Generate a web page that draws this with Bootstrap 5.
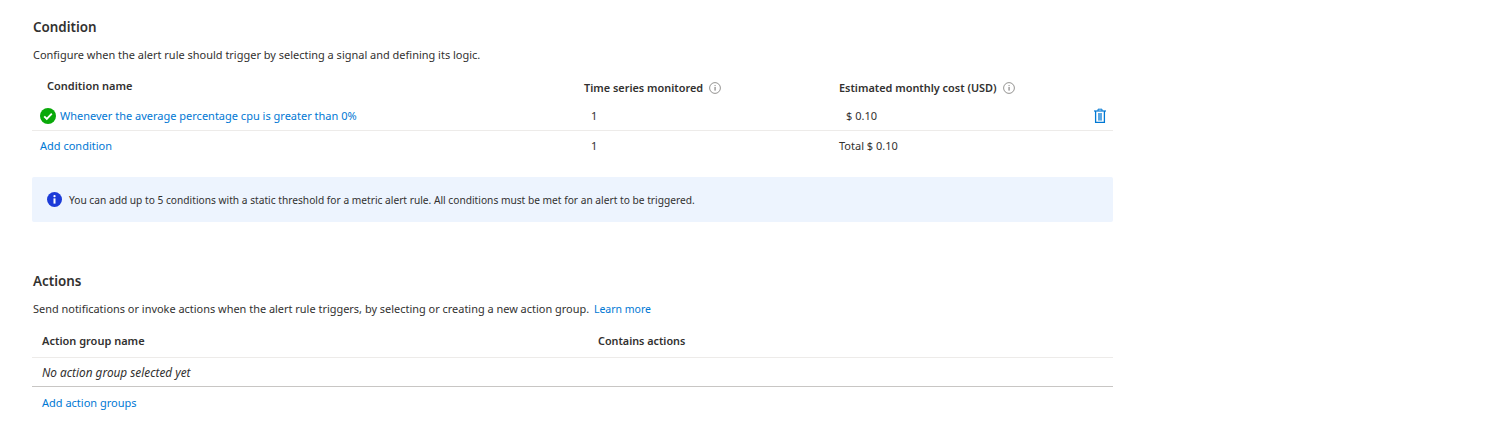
<!DOCTYPE html>
<html lang="en">
<head>
<meta charset="utf-8">
<title>Alert rule</title>
<link href="https://cdn.jsdelivr.net/npm/bootstrap@5.3.0/dist/css/bootstrap.min.css" rel="stylesheet">
<style>
body{font-family:"Noto Sans","Open Sans",sans-serif;font-size:11px;color:#323130;background:#fff;line-height:16px}
.page-wrap{width:1081px;margin-left:32px;padding-top:18px}
.sec-title{font-size:13.4px;font-weight:600;line-height:18px;margin:0;padding-left:1px}
.sec-desc{margin:0;line-height:16px;padding-left:1px}
.desc-one{margin-top:11px;font-size:10.98px}
.desc-two{margin-top:11px;font-size:10.95px}
.desc-two a{font-size:10.5px;margin-left:2px}
a.az-link{color:#0078d4;text-decoration:none}
.th-text{font-weight:600}
.cond-head{height:32px;margin-top:7px}
.cond-row{height:29px}
.cond-sep{border-bottom:1px solid #edebe9}
.c-a{width:552px;flex:none}
.c-b{width:255px;flex:none}
.c-c{flex:1 1 auto}
.pl-name{padding-left:15px}
.th-low{margin-top:3px;font-size:10.9px;gap:6px}
.pl-check{padding-left:8px}
.pl-one{padding-left:7px}
.info-bar{height:45px;margin-top:17px;background:#edf4fe;border-radius:2px;padding-left:15px;gap:7px;font-size:10.2px}
.act-title{margin-top:50px}
.act-head{height:33px;margin-top:8px;border-bottom:1px solid #edebe9;padding-left:10px}
.act-c1{width:556px;flex:none}
.act-c2{font-size:10.8px}
.act-row{height:29px;border-bottom:1px solid #c8c6c4;padding-left:10px;font-style:italic;font-size:11.8px;margin-bottom:8px}
.act-add{padding-left:10px}
.ico{display:block;flex:none}
.trash-ico{margin-right:6px}
</style>
</head>
<body>
<div class="page-wrap">
  <h2 class="sec-title">Condition</h2>
  <p class="sec-desc desc-one">Configure when the alert rule should trigger by selecting a signal and defining its logic.</p>

  <div class="d-flex align-items-center cond-head">
    <div class="c-a pl-name th-text">Condition name</div>
    <div class="c-b d-flex align-items-center th-low th-text">Time series monitored
      <svg class="ico" width="12" height="12" viewBox="0 0 12 12"><circle cx="6" cy="6" r="5.4" fill="none" stroke="#7a7876" stroke-width=".8"/><rect x="5.6" y="5" width=".9" height="3.6" fill="#605e5c"/><rect x="5.6" y="3.2" width=".9" height=".9" fill="#605e5c"/></svg>
    </div>
    <div class="c-c d-flex align-items-center th-low th-text">Estimated monthly cost (USD)
      <svg class="ico" width="12" height="12" viewBox="0 0 12 12"><circle cx="6" cy="6" r="5.4" fill="none" stroke="#7a7876" stroke-width=".8"/><rect x="5.6" y="5" width=".9" height="3.6" fill="#605e5c"/><rect x="5.6" y="3.2" width=".9" height=".9" fill="#605e5c"/></svg>
    </div>
  </div>

  <div class="d-flex align-items-center cond-row cond-sep">
    <div class="c-a pl-check d-flex align-items-center gap-1">
      <svg class="ico" width="16" height="16" viewBox="0 0 16 16"><circle cx="8" cy="8" r="8" fill="#09a909"/><path d="M4.2 8.3l2.6 2.6 5-5.2" fill="none" stroke="#fff" stroke-width="1.9"/></svg>
      <a class="az-link" href="#">Whenever the average percentage cpu is greater than 0%</a>
    </div>
    <div class="c-b pl-one">1</div>
    <div class="c-c pl-one d-flex align-items-center justify-content-between">
      <span>$ 0.10</span>
      <svg class="ico trash-ico" width="14" height="16" viewBox="0 0 14 16"><path d="M1 3h12" stroke="#0078d4" stroke-width="1.2"/><path d="M5 3V1.2h4V3" fill="none" stroke="#0078d4"/><path d="M2.6 3v11.4h8.8V3" fill="none" stroke="#0078d4" stroke-width="1.3"/><rect x="5" y="5" width="4" height="7.6" fill="#5ba8e4"/></svg>
    </div>
  </div>

  <div class="d-flex align-items-center cond-row">
    <div class="c-a pl-check"><a class="az-link" href="#">Add condition</a></div>
    <div class="c-b pl-one">1</div>
    <div class="c-c">Total $ 0.10</div>
  </div>

  <div class="d-flex align-items-center info-bar">
    <svg class="ico" width="15" height="15" viewBox="0 0 15 15"><circle cx="7.5" cy="7.5" r="7.5" fill="#1c3bd8"/><rect x="6.5" y="6.4" width="2" height="5.2" fill="#fff"/><circle cx="7.5" cy="4.2" r="1.15" fill="#fff"/></svg>
    <span>You can add up to 5 conditions with a static threshold for a metric alert rule. All conditions must be met for an alert to be triggered.</span>
  </div>

  <h2 class="sec-title act-title">Actions</h2>
  <p class="sec-desc desc-two">Send notifications or invoke actions when the alert rule triggers, by selecting or creating a new action group. <a class="az-link" href="#">Learn more</a></p>

  <div class="d-flex align-items-center act-head th-text">
    <div class="act-c1">Action group name</div>
    <div class="act-c2">Contains actions</div>
  </div>
  <div class="d-flex align-items-center act-row">No action group selected yet</div>
  <div class="act-add"><a class="az-link" href="#">Add action groups</a></div>
</div>
<script src="https://cdn.jsdelivr.net/npm/bootstrap@5.3.0/dist/js/bootstrap.bundle.min.js"></script>
</body>
</html>
